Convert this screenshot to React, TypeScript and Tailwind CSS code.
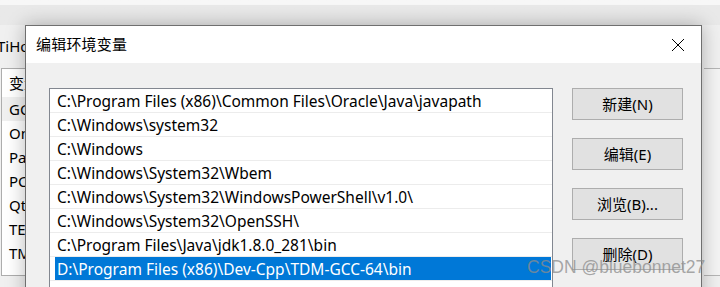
const paths = [
  "C:\\Program Files (x86)\\Common Files\\Oracle\\Java\\javapath",
  "C:\\Windows\\system32",
  "C:\\Windows",
  "C:\\Windows\\System32\\Wbem",
  "C:\\Windows\\System32\\WindowsPowerShell\\v1.0\\",
  "C:\\Windows\\System32\\OpenSSH\\",
  "C:\\Program Files\\Java\\jdk1.8.0_281\\bin",
  "D:\\Program Files (x86)\\Dev-Cpp\\TDM-GCC-64\\bin",
];

const bgRows = ["GC", "On", "Pa", "PC", "Qt", "TE", "TM"];

const buttons = ["新建(N)", "编辑(E)", "浏览(B)...", "删除(D)"];

const font = { fontFamily: '"Noto Sans", "Noto Sans CJK SC", sans-serif' };

export default function App() {
  return (
    <div
      className="relative w-[720px] h-[287px] overflow-hidden bg-[#f0f0f0] text-black"
      style={font}
    >
      {/* window behind the dialog */}
      <div className="h-[25px] bg-gradient-to-b from-[#f7f7f7] from-20% to-[#e9e9e9] to-20%" />
      <div className="flex h-[43px] items-center">
        <span className="-ml-[3px] text-[15px] leading-none">TiHo</span>
      </div>
      <div className="flex">
        <div className="ml-[1px] h-[208px] w-[40px] border border-[#adadad] bg-white">
          <div className="h-[28px] pl-[7px] pt-[3px] text-[15px]">变量</div>
          {bgRows.map((r, i) => (
            <div
              key={r}
              className={`h-[24px] pl-[7px] text-[15px] leading-[24px] ${
                i === 0 ? "bg-[#f0f0f0]" : ""
              }`}
            >
              {r}
            </div>
          ))}
        </div>
        <div className="ml-auto mr-[-4px] h-[208px] w-[20px] border-y border-[#b5b5b5] bg-[#f4f4f4]" />
      </div>

      {/* dialog */}
      <div className="absolute left-[25px] top-[25px] w-[677px] h-[300px] border border-[#6f6f6f] bg-[#f0f0f0] shadow-[0_0_18px_rgba(0,0,0,0.28)]">
        <div className="flex h-[37px] items-center justify-between bg-white pl-[10px] pr-[14px]">
          <span className="text-[15px] leading-none tracking-[0.2px]">编辑环境变量</span>
          <svg width="14" height="14" viewBox="0 0 14 14" className="mr-[2px]">
            <path d="M1 1 L13 13 M13 1 L1 13" stroke="#000" strokeWidth="1" />
          </svg>
        </div>
        <div className="flex pl-[23px] pt-[25px]">
          <div className="w-[504px] h-[220px] border border-[#828790] bg-white">
            {paths.map((p, i) => (
              <div key={p} className="h-[24px] border-b border-[#ececec]">
                <div
                  className={`ml-[5px] mr-[1px] h-[23px] pl-[2px] text-[15.5px] leading-[24px] whitespace-nowrap ${
                    i === paths.length - 1 ? "bg-[#0078d7] text-white" : ""
                  }`}
                >
                  {p}
                </div>
              </div>
            ))}
          </div>
          <div className="ml-[19px] flex flex-col gap-[18px]">
            {buttons.map((b) => (
              <button
                key={b}
                className="flex h-[32px] w-[111px] items-center justify-center border border-[#adadad] bg-[#e1e1e1] text-[15px] leading-none"
              >
                {b}
              </button>
            ))}
          </div>
        </div>
      </div>

      {/* watermark */}
      <div
        className="absolute left-[527px] top-[259px] text-[17.5px] leading-none text-[rgba(140,140,140,0.75)]"
        style={{ fontFamily: '"Liberation Sans", Arial, sans-serif' }}
      >
        CSDN @bluebonnet27
      </div>
    </div>
  );
}
